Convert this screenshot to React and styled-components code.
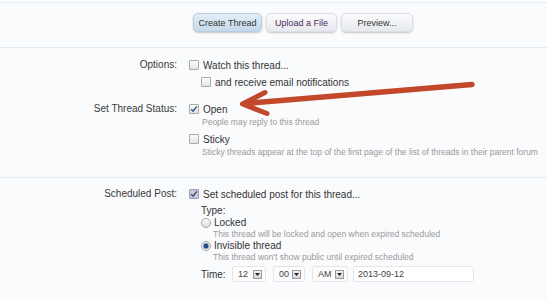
import React from "react"
import styled, { createGlobalStyle } from "styled-components"

const GlobalStyle = createGlobalStyle`
  html, body {
    margin: 0;
    padding: 0;
    background: #fafbfd;
  }
  body {
    font-family: "Liberation Sans", Arial, sans-serif;
    color: #3c3c3c;
  }
`

function Check({ checked, muted }) {
  return (
    <Box checked={checked} muted={muted}>
      {checked && (
        <svg width="8" height="8" viewBox="0 0 8 8">
          <path d="M1.2 4.2 L3.1 6.2 L6.8 1.3" fill="none" stroke={muted ? "#3d4566" : "#2f4f8c"} strokeWidth="1.4" />
        </svg>
      )}
    </Box>
  )
}

function Select({ value, width }) {
  return (
    <SelectBox width={width}>
      <span>{value}</span>
      <DropButton>
        <svg width="5" height="3" viewBox="0 0 5 3">
          <path d="M0 0 L5 0 L2.5 3 Z" fill="#222" />
        </svg>
      </DropButton>
    </SelectBox>
  )
}

export default function App() {
  return (
    <Page>
      <GlobalStyle />
      <TopRule />
      <ButtonBar>
        <Button primary width={69}>Create Thread</Button>
        <Button purple width={71}>Upload a File</Button>
        <Button width={72}>Preview...</Button>
      </ButtonBar>

      <Section pad="10px 0 19px">
        <Row>
          <Label>Options:</Label>
          <Field>
            <CheckLine><Check />Watch this thread...</CheckLine>
            <CheckLine indent={12} top={3}><Check />and receive email notifications</CheckLine>
          </Field>
        </Row>
        <Row top={13}>
          <Label>Set Thread Status:</Label>
          <Field>
            <CheckLine><Check checked />Open</CheckLine>
            <Hint indent={13}>People may reply to this thread</Hint>
            <CheckLine top={4}><Check />Sticky</CheckLine>
            <Hint indent={13}>Sticky threads appear at the top of the first page of the list of threads in their parent forum</Hint>
          </Field>
        </Row>
      </Section>

      <Section pad="9px 0 18px" last>
        <Row>
          <Label>Scheduled Post:</Label>
          <Field>
            <CheckLine><Check checked muted />Set scheduled post for this thread...</CheckLine>
            <SubGroup>
              <TypeLabel>Type:</TypeLabel>
              <RadioLine><Radio />Locked</RadioLine>
              <Hint indent={12} small>This thread will be locked and open when expired scheduled</Hint>
              <RadioLine><Radio selected />Invisible thread</RadioLine>
              <Hint indent={12} small>This thread won't show public until expired scheduled</Hint>
              <TimeRow>
                <TimeLabel>Time:</TimeLabel>
                <Select value="12" width={34} />
                <Select value="00" width={32} />
                <Select value="AM" width={36} />
                <DateInput>2013-09-12</DateInput>
              </TimeRow>
            </SubGroup>
          </Field>
        </Row>
      </Section>

      <Arrow width="547" height="300" viewBox="0 0 547 300">
        <path d="M472 84.5 L246 103.5" stroke="#c3472b" strokeWidth="5.5" strokeLinecap="round" fill="none" />
        <path d="M265 92.5 L242.5 104 L267 113.5" stroke="#c3472b" strokeWidth="5" strokeLinecap="round" strokeLinejoin="round" fill="none" />
      </Arrow>
    </Page>
  )
}

const Page = styled.div`
  position: relative;
  width: 547px;
  height: 300px;
  overflow: hidden;
  background: #fafbfd;
`

const TopRule = styled.div`
  height: 2px;
  border-bottom: 1px solid #e6ecf1;
`

const ButtonBar = styled.div`
  display: flex;
  gap: 4px;
  padding: 10px 0 0 193px;
  height: 34px;
  border-bottom: 1px solid #e4ebf0;
`

const Button = styled.div`
  width: ${p => p.width}px;
  height: 19px;
  box-sizing: border-box;
  display: flex;
  align-items: center;
  justify-content: center;
  border-radius: 5px;
  font-size: 9px;
  color: ${p => (p.purple ? "#4b2f5c" : "#333")};
  background: ${p =>
    p.primary
      ? "linear-gradient(#e4eef8, #c6d8ea)"
      : "linear-gradient(#fbfbfc, #e7e9ee)"};
  border: 1px solid ${p => (p.primary ? "#b8cbe0" : "#dcdfe5")};
  box-shadow: 0 1px 2px rgba(0, 0, 0, 0.22);
`

const Section = styled.div`
  padding: ${p => p.pad};
  border-bottom: ${p => (p.last ? "none" : "1px solid #e0ebf0")};
`

const Row = styled.div`
  display: grid;
  grid-template-columns: 177px 1fr;
  column-gap: 12px;
  margin-top: ${p => p.top || 0}px;
`

const Label = styled.div`
  text-align: right;
  font-size: 10px;
  line-height: 14px;
  color: #3a3a3a;
`

const Field = styled.div`
  display: flex;
  flex-direction: column;
`

const CheckLine = styled.div`
  display: flex;
  align-items: center;
  gap: 4px;
  height: 14px;
  font-size: 10px;
  color: #333;
  margin-left: ${p => p.indent || 0}px;
  margin-top: ${p => p.top || 0}px;
  white-space: nowrap;
`

const Box = styled.span`
  width: 10px;
  height: 10px;
  box-sizing: border-box;
  display: flex;
  align-items: center;
  justify-content: center;
  border: 1px solid ${p => (p.muted ? "#9a9db4" : "#a9a9a9")};
  border-radius: 1px;
  background: ${p =>
    p.muted ? "#c9cbde" : "linear-gradient(#fdfdfd, #e4e4e4)"};
`

const Hint = styled.div`
  font-size: 8.5px;
  line-height: ${p => (p.small ? 11 : 12)}px;
  color: #9a9a9a;
  margin-left: ${p => p.indent || 0}px;
  margin-top: ${p => (p.small ? 1 : 0)}px;
  white-space: nowrap;
`

const SubGroup = styled.div`
  display: flex;
  flex-direction: column;
  margin-left: 12px;
  margin-top: 4px;
`

const TypeLabel = styled.div`
  font-size: 10px;
  line-height: 12px;
  color: #333;
`

const RadioLine = styled.div`
  display: flex;
  align-items: center;
  gap: 3px;
  height: 11px;
  font-size: 10px;
  color: #333;
`

const Radio = styled.span`
  width: 10px;
  height: 10px;
  box-sizing: border-box;
  border-radius: 50%;
  border: 1px solid #a5a5a5;
  background: ${p =>
    p.selected
      ? "radial-gradient(circle, #1f4f7e 0 2px, #7fa6c8 2.6px, #e8eef4 3.4px)"
      : "linear-gradient(#fdfdfd, #dedede)"};
`

const TimeRow = styled.div`
  display: flex;
  align-items: center;
  gap: 7px;
  margin-top: 3px;
`

const TimeLabel = styled.span`
  font-size: 10px;
  color: #333;
  width: 24px;
`

const SelectBox = styled.div`
  width: ${p => p.width}px;
  height: 16px;
  box-sizing: border-box;
  display: flex;
  align-items: center;
  justify-content: space-between;
  padding: 0 3px 0 5px;
  background: #fdfdfe;
  border: 1px solid #e2e5ea;
  border-radius: 3px;
  font-size: 9px;
  color: #444;
`

const DropButton = styled.span`
  width: 9px;
  height: 9px;
  box-sizing: border-box;
  display: flex;
  align-items: center;
  justify-content: center;
  border: 1px solid #9a9a9a;
  background: linear-gradient(#f3f3f3, #d6d6d6);
`

const DateInput = styled.div`
  width: 121px;
  height: 16px;
  box-sizing: border-box;
  display: flex;
  align-items: center;
  padding-left: 4px;
  margin-left: -2px;
  background: #fff;
  border: 1px solid #e2e5ea;
  border-radius: 3px;
  font-size: 9px;
  color: #444;
`

const Arrow = styled.svg`
  position: absolute;
  left: 0;
  top: 0;
  pointer-events: none;
`
